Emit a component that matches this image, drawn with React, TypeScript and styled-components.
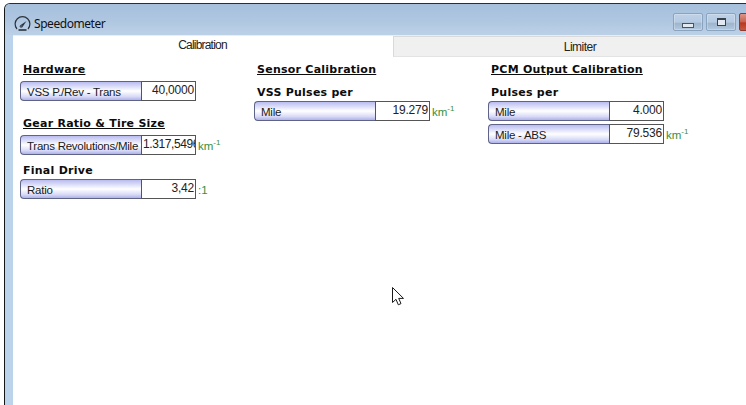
import React from "react";
import styled, { createGlobalStyle } from "styled-components";

const GlobalStyle = createGlobalStyle`
  html, body {
    margin: 0;
    padding: 0;
    height: 100%;
    background: #ffffff;
    overflow: hidden;
  }
`;

type Row = { label: string; value: string; unit?: string };
type Group = { title: string; underline?: boolean; after: number; rows: Row[] };

const columns: { groups: Group[] }[] = [
  {
    groups: [
      {
        title: "Hardware",
        underline: true,
        after: 16,
        rows: [{ label: "VSS P./Rev - Trans", value: "40,0000" }],
      },
      {
        title: "Gear Ratio & Tire Size",
        underline: true,
        after: 9,
        rows: [{ label: "Trans Revolutions/Mile", value: "1.317,5496", unit: "km" }],
      },
      { title: "Final Drive", after: 0, rows: [{ label: "Ratio", value: "3,42", unit: ":1" }] },
    ],
  },
  {
    groups: [
      { title: "Sensor Calibration", underline: true, after: 8, rows: [] },
      { title: "VSS Pulses per", after: 0, rows: [{ label: "Mile", value: "19.279", unit: "km" }] },
    ],
  },
  {
    groups: [
      { title: "PCM Output Calibration", underline: true, after: 8, rows: [] },
      {
        title: "Pulses per",
        after: 0,
        rows: [
          { label: "Mile", value: "4.000" },
          { label: "Mile - ABS", value: "79.536", unit: "km" },
        ],
      },
    ],
  },
];

function GaugeIcon() {
  return (
    <svg width="17" height="17" viewBox="0 0 17 17" fill="none">
      <path d="M3 14A7.4 7.4 0 1 1 14 14" stroke="#2b333b" strokeWidth="1.2" />
      <path d="M4.5 15h8" stroke="#39434d" strokeWidth="1.8" />
      <path d="M6 10.5L12.5 6L8.5 12z" fill="#2b333b" />
      <circle cx="7.2" cy="11.2" r="1.5" fill="#4a5560" />
    </svg>
  );
}

function Cursor() {
  return (
    <svg width="13" height="20" viewBox="0 0 13 20">
      <path
        d="M0.5 0.5V15.5L4 12.3L6.3 17.8L9 16.6L6.7 11.4H11.5z"
        fill="#ffffff"
        stroke="#1a1a1a"
        strokeWidth="1"
      />
    </svg>
  );
}

export default function App() {
  return (
    <>
      <GlobalStyle />
      <Page>
        <Window>
          <TitleBar>
            <GaugeIcon />
            <Title>Speedometer</Title>
            <Controls>
              <ControlButton>
                <MinimizeGlyph />
              </ControlButton>
              <ControlButton>
                <MaximizeGlyph />
              </ControlButton>
              <CloseButton />
            </Controls>
          </TitleBar>
          <Client>
            <Tabs>
              <ActiveTab>Calibration</ActiveTab>
              <InactiveTab>Limiter</InactiveTab>
            </Tabs>
            <Panel>
              {columns.map((column, i) => (
                <Column key={i}>
                  {column.groups.map((group) => (
                    <GroupBox key={group.title} $after={group.after}>
                      <Heading $underline={group.underline}>{group.title}</Heading>
                      {group.rows.map((row) => (
                        <FieldRow key={row.label}>
                          <FieldLabel>{row.label}</FieldLabel>
                          <FieldValue $clipped={row.value.length > 8}>{row.value}</FieldValue>
                          {row.unit === "km" && (
                            <Unit>
                              km<sup>-1</sup>
                            </Unit>
                          )}
                          {row.unit === ":1" && <Unit>:1</Unit>}
                        </FieldRow>
                      ))}
                    </GroupBox>
                  ))}
                </Column>
              ))}
            </Panel>
            <CursorSpot>
              <Cursor />
            </CursorSpot>
          </Client>
        </Window>
      </Page>
    </>
  );
}

const Page = styled.div`
  width: 746px;
  height: 405px;
  overflow: hidden;
  padding: 3px 0 0 4px;
  box-sizing: border-box;
  background: #ffffff;
`;

const Window = styled.div`
  width: 770px;
  height: 420px;
  display: flex;
  flex-direction: column;
  box-sizing: border-box;
  border-top: 1px solid #2a2e33;
  border-left: 1px solid #14171a;
  border-top-left-radius: 6px;
  background: #bcd3ec;
  padding-left: 8px;
`;

const TitleBar = styled.div`
  height: 31px;
  box-sizing: border-box;
  margin-left: -8px;
  padding: 7px 5px 0 9px;
  display: flex;
  align-items: center;
  gap: 3px;
  flex-shrink: 0;
  background: linear-gradient(to bottom, #a6bfdc 0%, #aec6e0 50%, #bcd1e8 100%);
  border-top-left-radius: 5px;
`;

const Title = styled.span`
  font-family: "Noto Sans", "Liberation Sans", sans-serif;
  font-size: 12px;
  letter-spacing: -0.45px;
  color: #111111;
`;

const Controls = styled.div`
  display: flex;
  gap: 3px;
  margin-left: auto;
  align-self: flex-start;
  margin-top: 2px;
`;

const ControlButton = styled.div`
  width: 30px;
  height: 18px;
  box-sizing: border-box;
  border: 1px solid #8aa4c0;
  border-radius: 2px;
  box-shadow: inset 0 0 0 1px rgba(255, 255, 255, 0.25);
  background: linear-gradient(to bottom, #bdd1e7 0%, #b6cbe2 50%, #9db5cd 60%, #b4c9df 100%);
  display: flex;
  align-items: center;
  justify-content: center;
`;

const MinimizeGlyph = styled.div`
  width: 10px;
  height: 3px;
  margin-top: 6px;
  border: 1px solid #4a545e;
  background: #e3e9f0;
`;

const MaximizeGlyph = styled.div`
  width: 7px;
  height: 5px;
  margin-top: -1px;
  border: 1px solid #39424c;
  border-top-width: 2px;
  background: #e3e9f0;
`;

const CloseButton = styled.div`
  width: 30px;
  height: 18px;
  box-sizing: border-box;
  border: 1px solid #8a3a30;
  border-radius: 2px;
  background: linear-gradient(to bottom, #d9978a 0%, #c9604c 50%, #b43a22 55%, #c8583e 100%);
`;

const Client = styled.div`
  flex: 1;
  display: flex;
  flex-direction: column;
  background: #ffffff;
  border-top: 1px solid #e8eef5;
`;

const Tabs = styled.div`
  display: flex;
  height: 21px;
  flex-shrink: 0;
  font-family: "Liberation Sans", Arial, sans-serif;
  font-size: 12px;
  letter-spacing: -0.8px;
  color: #222222;
`;

const ActiveTab = styled.div`
  width: 379px;
  box-sizing: border-box;
  text-align: center;
  line-height: 19px;
  background: #ffffff;
`;

const InactiveTab = styled.div`
  flex: 1;
  padding-right: 8px;
  text-align: center;
  line-height: 20px;
  margin-left: 1px;
  background: #f0f0f0;
  border-top: 1px solid #d9d9d9;
  border-left: 1px solid #d9d9d9;
  border-bottom: 1px solid #e3e3e3;
  box-sizing: border-box;
  letter-spacing: -0.5px;
`;

const Panel = styled.div`
  display: grid;
  grid-template-columns: repeat(3, 234px);
  padding: 6px 0 0 7px;
`;

const Column = styled.div`
  display: flex;
  flex-direction: column;
`;

const GroupBox = styled.div<{ $after: number }>`
  display: flex;
  flex-direction: column;
  gap: 3px;
  margin-bottom: ${(p) => p.$after}px;
`;

const Heading = styled.div<{ $underline?: boolean }>`
  margin-left: 3px;
  margin-bottom: ${(p) => (p.$underline ? 1 : -2)}px;
  font-family: "DejaVu Sans", Verdana, sans-serif;
  font-size: 11px;
  font-weight: 700;
  letter-spacing: 0.25px;
  line-height: 14px;
  white-space: nowrap;
  color: #0c0c0c;
  text-decoration: ${(p) => (p.$underline ? "underline" : "none")};
`;

const FieldRow = styled.div`
  display: flex;
  align-items: center;
  height: 20px;
  font-family: "Liberation Sans", Arial, sans-serif;
  font-size: 12px;
`;

const FieldLabel = styled.div`
  width: 121px;
  height: 20px;
  box-sizing: border-box;
  padding-left: 6px;
  font-size: 11.5px;
  line-height: 20px;
  letter-spacing: -0.25px;
  white-space: nowrap;
  overflow: hidden;
  color: #1a1a1a;
  border: 1px solid #5f6388;
  border-right: 0;
  border-radius: 4px 0 0 4px;
  background: linear-gradient(to bottom, #b9bcf0 0%, #e9eafb 35%, #ffffff 50%, #d9dbf7 80%, #aeb2ea 100%);
`;

const FieldValue = styled.div<{ $clipped?: boolean }>`
  width: 55px;
  height: 20px;
  box-sizing: border-box;
  border: 1px solid #555555;
  padding: 0 1px;
  text-align: ${(p) => (p.$clipped ? "left" : "right")};
  line-height: 16px;
  letter-spacing: ${(p) => (p.$clipped ? "-0.4px" : "-0.2px")};
  white-space: nowrap;
  overflow: hidden;
  color: #222222;
  background: #ffffff;
`;

const Unit = styled.span`
  margin-left: 2px;
  padding-top: 2px;
  color: #3a8f3a;
  font-size: 11.5px;

  sup {
    font-size: 8px;
    line-height: 0;
  }
`;

const CursorSpot = styled.div`
  position: absolute;
  left: 392px;
  top: 287px;
  line-height: 0;
`;
